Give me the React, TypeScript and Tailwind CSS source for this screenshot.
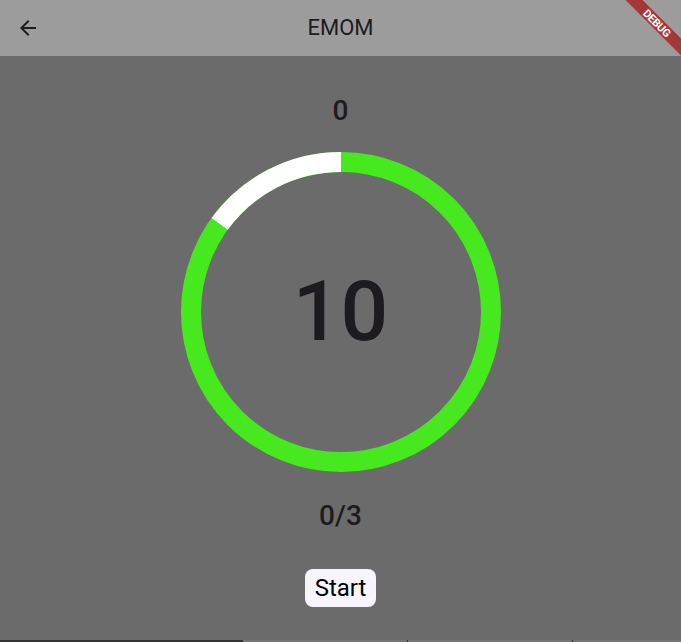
import React from "react";

export default function App() {
  const font = { fontFamily: "Roboto, 'Noto Sans', sans-serif" };
  return (
    <div className="relative w-[681px] h-[642px] overflow-hidden flex flex-col bg-[#6b6b6b]" style={font}>
      <header className="relative h-14 shrink-0 bg-[#9c9c9c] flex items-center justify-center">
        <button className="absolute left-4 top-4 w-6 h-6 text-[#1d1b20]">
          <svg viewBox="0 0 24 24" width="24" height="24" fill="currentColor">
            <path d="M20 11H7.83l5.59-5.59L12 4l-8 8 8 8 1.41-1.41L7.83 13H20v-2z" />
          </svg>
        </button>
        <h1 className="text-[22px] leading-7 text-[#1d1b20] font-normal">EMOM</h1>
      </header>

      <main className="flex-1 flex flex-col items-center pt-[37px]">
        <div className="text-[28px] leading-[36px] font-medium text-[#1d1b20]">0</div>
        <div className="relative mt-[23px] w-[320px] h-[320px]">
          <svg width="320" height="320" viewBox="0 0 320 320">
            <circle cx="160" cy="160" r="150" fill="none" stroke="#46e81e" strokeWidth="20" />
            <path d="M 38.65 71.83 A 150 150 0 0 1 160 10" fill="none" stroke="#ffffff" strokeWidth="20" />
          </svg>
          <div className="absolute inset-0 flex items-center justify-center">
            <span className="text-[84px] leading-none font-medium text-[#1d1b20]">10</span>
          </div>
        </div>
        <div className="mt-[26px] text-[28px] leading-[36px] font-medium text-[#1d1b20]">0/3</div>
        <button className="mt-[35px] h-[38px] px-[10px] rounded-lg bg-[#f7f4fb] text-[24px] leading-none text-black">
          Start
        </button>
      </main>

      <div className="h-[2px] shrink-0 flex">
        <div className="w-[243px] bg-[#333333]" />
        <div className="flex-1 bg-[#757575] relative">
          <div className="absolute left-[164px] top-0 w-px h-[2px] bg-[#333333]" />
          <div className="absolute left-[329px] top-0 w-px h-[2px] bg-[#333333]" />
        </div>
      </div>

      <div className="absolute left-[607px] top-[17px] w-[100px] h-3 rotate-45 bg-[#a43838] flex items-center justify-center">
        <span className="text-[11px] leading-none font-bold text-white tracking-tight">DEBUG</span>
      </div>
    </div>
  );
}
